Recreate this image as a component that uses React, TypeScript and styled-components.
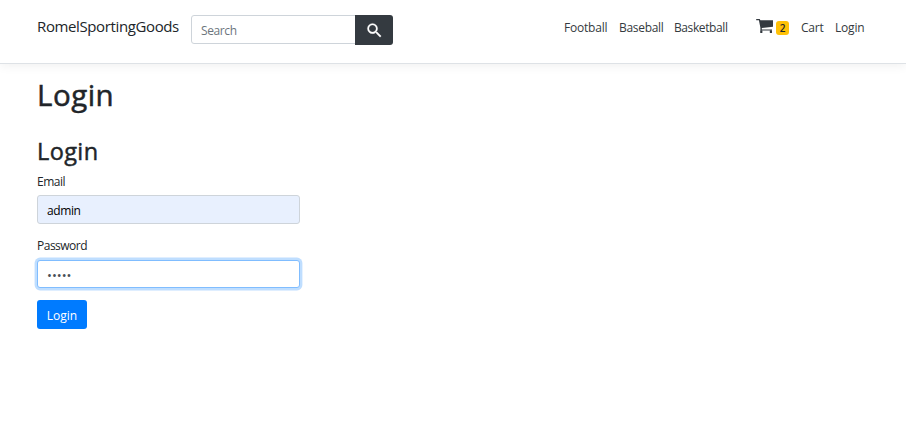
import React from 'react';
import styled, { createGlobalStyle } from 'styled-components';

const GlobalStyle = createGlobalStyle`
  *, *::before, *::after { box-sizing: border-box; }
  body {
    margin: 0;
    background: #fff;
    color: #212529;
    font-family: 'Segoe UI', 'Open Sans', 'Noto Sans', sans-serif;
    font-size: 12px;
    line-height: 18px;
  }
`;

const Header = styled.header`
  display: flex;
  align-items: flex-start;
  height: 64px;
  padding: 15px 36px 0 37px;
  border-bottom: 1px solid #dee2e6;
  box-shadow: 0 3px 9px rgba(0, 0, 0, 0.05);
`;

const Brand = styled.a`
  width: 154px;
  font-size: 15px;
  line-height: 22px;
  letter-spacing: -0.38px;
  white-space: nowrap;
`;

const SearchForm = styled.form`
  display: flex;
  align-items: flex-start;
`;

const Input = styled.input<{ $filled?: boolean; $focused?: boolean }>`
  display: block;
  width: 263px;
  height: 29px;
  padding: 2px 9px 0;
  font: inherit;
  font-size: 12px;
  letter-spacing: -0.4px;
  color: ${p => (p.$filled ? '#000' : '#495057')};
  background: ${p => (p.$filled ? '#e8f0fe' : '#fff')};
  border: 1px solid ${p => (p.$focused ? '#80bdff' : '#ced4da')};
  border-radius: 3px;
  outline: none;
  box-shadow: ${p => (p.$focused ? '0 0 0 2.4px rgba(0, 123, 255, 0.25)' : 'none')};
`;

const SearchInput = styled(Input)`
  width: 165px;
  border-radius: 3px 0 0 3px;
  &::placeholder { color: #6c757d; opacity: 1; }
`;

const PasswordInput = styled(Input)`
  height: 28px;
  font-size: 13px;
  letter-spacing: 0;
`;

const SearchButton = styled.button`
  display: flex;
  align-items: center;
  justify-content: center;
  width: 38px;
  height: 30px;
  margin-left: -1px;
  padding: 0;
  color: #fff;
  background: #343a40;
  border: 0;
  border-radius: 0 3px 3px 0;
`;

const Nav = styled.nav`
  display: flex;
  margin-left: auto;
  padding-top: 3px;
`;

const NavLink = styled.a<{ $width: number; $spacing?: number }>`
  width: ${p => p.$width}px;
  padding-top: 1px;
  color: #343a40;
  letter-spacing: ${p => p.$spacing ?? -0.2}px;
  white-space: nowrap;
`;

const CartStatus = styled.span`
  display: flex;
  align-items: flex-start;
  width: 45px;
  padding-top: 1px;
`;

const Badge = styled.span`
  width: 13px;
  height: 14px;
  margin: 2px 0 0 2px;
  border-radius: 3px;
  background: #ffc107;
  color: #212529;
  font-size: 10px;
  font-weight: 600;
  line-height: 15px;
  text-align: center;
`;

const Main = styled.main`
  padding: 13px 37px;
`;

const Title = styled.h1`
  margin: 0 0 24px;
  font-size: 29.5px;
  line-height: 36px;
  font-weight: 400;
  letter-spacing: 0.5px;
  -webkit-text-stroke: 0.5px currentColor;
`;

const Subtitle = styled.h2`
  margin: 0 0 6px;
  font-size: 23.5px;
  line-height: 29px;
  font-weight: 400;
  letter-spacing: 0.4px;
  -webkit-text-stroke: 0.45px currentColor;
`;

const Field = styled.div`
  margin-bottom: 12px;
`;

const Label = styled.label<{ $height: number }>`
  display: block;
  height: ${p => p.$height}px;
  padding-top: 1px;
  letter-spacing: -0.5px;
`;

const SubmitButton = styled.button`
  display: block;
  width: 50px;
  height: 29px;
  padding: 2px 0 0;
  font: inherit;
  color: #fff;
  background: #007bff;
  border: 0;
  border-radius: 3px;
`;

const SearchIcon = () => (
  <svg width="19" height="19" viewBox="0 0 24 24" fill="currentColor" stroke="currentColor" strokeWidth="0.3">
    <path d="M15.5 14h-.79l-.28-.27A6.471 6.471 0 0 0 16 9.5 6.5 6.5 0 1 0 9.5 16c1.61 0 3.09-.59 4.23-1.57l.27.28v.79l5 4.99L20.49 19l-4.99-5zm-6 0C7.01 14 5 11.99 5 9.5S7.01 5 9.5 5 14 7.01 14 9.5 11.99 14 9.5 14z" />
  </svg>
);

const CartIcon = () => (
  <svg width="18" height="15" viewBox="0 0 18 15" fill="#343a40">
    <path d="M.2 0h3.5l.7 1.2H17v6.6L5.8 9.1v1.3H16v1.2H4.4V8.8L2.9 1.2H.2z" />
    <rect x="4.2" y="11.3" width="2.2" height="2.7" rx=".5" />
    <rect x="13.8" y="11.3" width="2.2" height="2.7" rx=".5" />
  </svg>
);

export default function App() {
  return (
    <>
      <GlobalStyle />
      <Header>
        <Brand>RomelSportingGoods</Brand>
        <SearchForm>
          <SearchInput type="text" placeholder="Search" />
          <SearchButton type="button" aria-label="Search"><SearchIcon /></SearchButton>
        </SearchForm>
        <Nav>
          <NavLink $width={55}>Football</NavLink>
          <NavLink $width={55} $spacing={-0.3}>Baseball</NavLink>
          <NavLink $width={82} $spacing={-0.4}>Basketball</NavLink>
          <CartStatus><CartIcon /><Badge>2</Badge></CartStatus>
          <NavLink $width={34}>Cart</NavLink>
          <NavLink $width={35}>Login</NavLink>
        </Nav>
      </Header>
      <Main>
        <Title>Login</Title>
        <Subtitle>Login</Subtitle>
        <Field>
          <Label htmlFor="email" $height={23}>Email</Label>
          <Input id="email" type="text" defaultValue="admin" $filled />
        </Field>
        <Field>
          <Label htmlFor="password" $height={24}>Password</Label>
          <PasswordInput id="password" type="password" defaultValue="admin" $focused />
        </Field>
        <SubmitButton type="button">Login</SubmitButton>
      </Main>
    </>
  );
}
